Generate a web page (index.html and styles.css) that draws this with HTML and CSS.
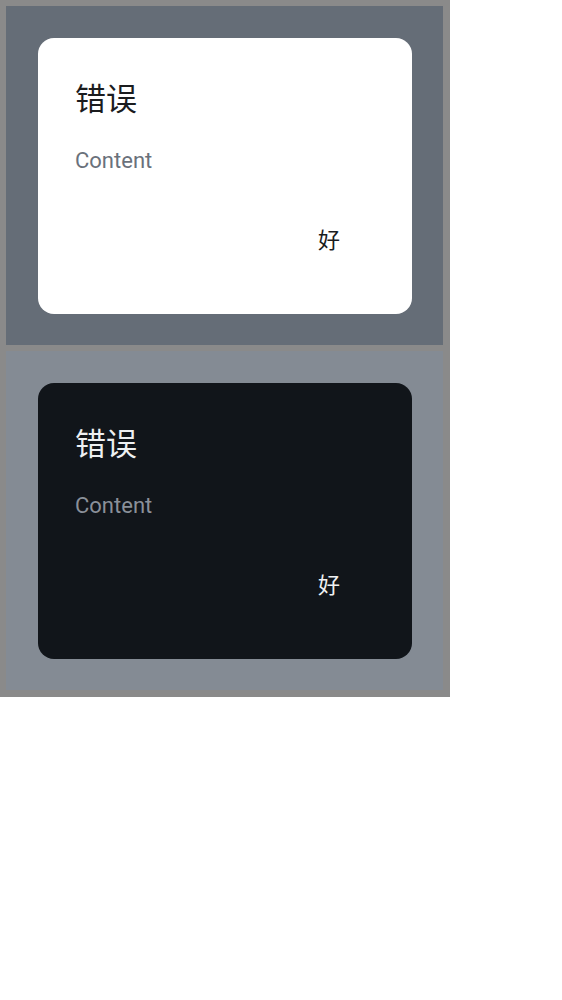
FILE: index.html
```html
<!DOCTYPE html>
<html lang="zh">
<head>
<meta charset="utf-8">
<link rel="stylesheet" href="styles.css">
</head>
<body>
<div class="frame">
  <section class="panel panel-light">
    <div class="dialog dialog-light">
      <h2 class="title">错误</h2>
      <p class="content">Content</p>
      <div class="actions"><button class="btn">好</button></div>
    </div>
  </section>
  <section class="panel panel-dark">
    <div class="dialog dialog-dark">
      <h2 class="title">错误</h2>
      <p class="content">Content</p>
      <div class="actions"><button class="btn">好</button></div>
    </div>
  </section>
</div>
</body>
</html>
```
FILE: styles.css
```css
html, body { margin: 0; padding: 0; background: #ffffff; }
body { font-family: Roboto, "Noto Sans CJK SC", sans-serif; }
.frame {
  width: 450px;
  box-sizing: border-box;
  background: #8a8a8a;
  padding: 6px 7px 7px 6px;
  display: flex;
  flex-direction: column;
  gap: 6px;
}
.panel {
  height: 339px;
  box-sizing: border-box;
  padding: 32px 0 0 32px;
}
.panel-light { background: #656d77; }
.panel-dark { background: #848b94; }
.dialog {
  width: 374px;
  height: 276px;
  box-sizing: border-box;
  border-radius: 16px;
  padding: 41px 38px 0 37px;
  display: flex;
  flex-direction: column;
}
.dialog-light { background: #ffffff; color: #1b1c1e; }
.dialog-dark { background: #11151a; color: #eef0f2; }
.title {
  margin: 0;
  font-family: "Noto Sans CJK SC", sans-serif;
  font-weight: 400;
  font-size: 31px;
  line-height: 36px;
}
.content {
  margin: 33px 0 0 0;
  font-family: Roboto, sans-serif;
  font-size: 22px;
  line-height: 26px;
}
.dialog-light .content { color: #6a717b; }
.dialog-dark .content { color: #8a9099; }
.actions {
  display: flex;
  justify-content: flex-end;
  margin-top: 49px;
}
.btn {
  border: 0;
  background: transparent;
  padding: 0;
  margin-right: 34px;
  font-family: "Noto Sans CJK SC", sans-serif;
  font-size: 22px;
  line-height: 30px;
  color: inherit;
}
```
